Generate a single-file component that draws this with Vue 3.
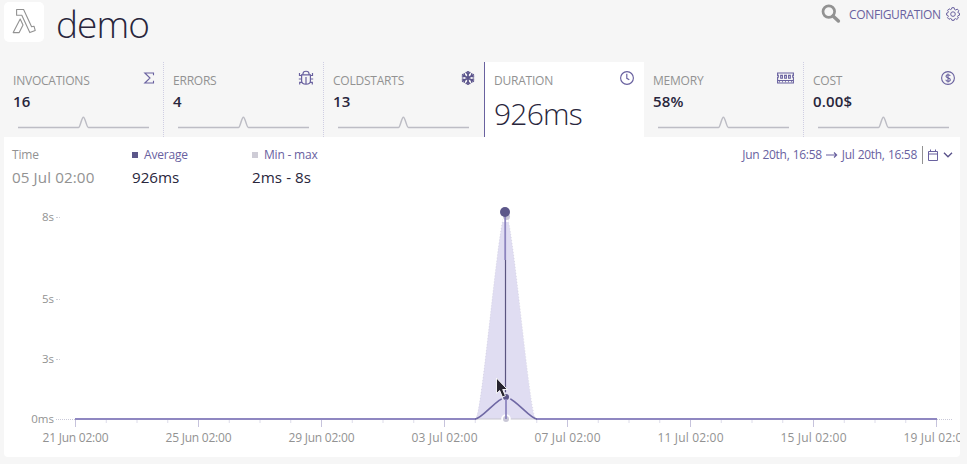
<script setup>
const metrics = [
  { key: 'inv', label: 'INVOCATIONS', value: '16', icon: 'sigma' },
  { key: 'err', label: 'ERRORS', value: '4', icon: 'bug' },
  { key: 'cold', label: 'COLDSTARTS', value: '13', icon: 'snow' },
  { key: 'dur', label: 'DURATION', value: '926ms', icon: 'clock', active: true },
  { key: 'mem', label: 'MEMORY', value: '58%', icon: 'memory' },
  { key: 'cost', label: 'COST', value: '0.00$', icon: 'dollar' },
]
const yTicks = [
  { label: '8s', y: 217 },
  { label: '5s', y: 299 },
  { label: '3s', y: 359 },
  { label: '0ms', y: 419 },
]
const dates = ['21 Jun', '25 Jun', '29 Jun', '03 Jul', '07 Jul', '11 Jul', '15 Jul', '19 Jul']
const xTicks = dates.map((d, i) => ({ label: d + ' 02:00', x: 75.5 + i * 123 }))
const minor = Array.from({ length: 28 }, (_, i) => 75.5 + i * 30.75)
</script>

<template>
  <div class="page">
    <header class="top">
      <div class="logo">
        <svg width="24" height="26" viewBox="0 0 24 26" fill="none" stroke="#929292" stroke-width="1.1" stroke-linejoin="round">
          <path d="M4.6 1.5H11.6L19.6 18.8L22 18.2L23.2 22.4L17.8 24.6L9.8 7.2H4.6Z" />
          <path d="M8.2 11L11 17L7.2 24.6H1.2Z" />
        </svg>
      </div>
      <h1>demo</h1>
      <div class="actions">
        <svg class="search" width="20" height="20" viewBox="0 0 20 20" fill="none" stroke="#929292">
          <circle cx="7.8" cy="7.6" r="5.8" stroke-width="2.7" />
          <path d="M12 12L17.4 17" stroke-width="3.4" stroke-linecap="round" />
        </svg>
        <span class="config">CONFIGURATION</span>
        <svg class="gear" width="14" height="14" viewBox="0 0 14 14" fill="none" stroke="#69619f" stroke-width="1" stroke-linejoin="round">
          <path d="M5.9.7H8.1L8.6 2.5L9.7 3L11.3 2.1L12.8 3.7L11.9 5.2L12.3 6L13.5 6.3V8.2L12 8.6L11.6 9.5L12.4 11L10.9 12.4L9.5 11.6L8.5 12L8.1 13.3H5.9L5.4 11.9L4.4 11.5L3 12.3L1.5 10.7L2.4 9.4L2 8.5L.6 8.1V6.1L2 5.7L2.4 4.8L1.6 3.3L3.1 1.8L4.5 2.6L5.4 2.2Z" />
          <circle cx="7" cy="7.1" r="2.3" />
        </svg>
      </div>
    </header>

    <nav class="tabs">
      <div v-for="m in metrics" :key="m.key" class="tab" :class="[m.key, { active: m.active }]">
        <div class="tab-head">
          <span class="label">{{ m.label }}</span>
          <svg v-if="m.icon === 'sigma'" class="icon" width="12" height="16" viewBox="2 0 12 16" fill="none" stroke="#69619f" stroke-width="1.1">
            <path d="M12.5 5.2V3H3.8L9 8L3.8 13H12.5V10.8" />
          </svg>
          <svg v-else-if="m.icon === 'bug'" class="icon" width="17" height="16" viewBox="0 0 17 16" fill="none" stroke="#69619f" stroke-width="1.2">
            <path d="M4.9 4.6V4C5 .3 11 .3 11.1 4V4.6M3.6 4.9H12.4V11C12.4 15.3 3.6 15.3 3.6 11ZM8 7V14M1.5 3V5.5H3.5M14.5 3V5.5H12.5M.8 9H3.5M15.2 9H12.5M1.7 14.5V12.3H3.8M14.3 14.5V12.3H12.2" />
          </svg>
          <svg v-else-if="m.icon === 'snow'" class="icon" width="15" height="16" viewBox="0 0 15 16" fill="none" stroke="#5c558c" stroke-width="1.7">
            <path d="M7 1V15M1 4.5L13 11.5M1 11.5L13 4.5" />
            <path d="M4.7 2L7 4.3L9.3 2M4.7 14L7 11.7L9.3 14M.8 7.1L3.8 6.2L3.1 3.1M13.2 8.9L10.2 9.8L10.9 12.9M.8 8.9L3.8 9.8L3.1 12.9M13.2 7.1L10.2 6.2L10.9 3.1" stroke-width="1.3" />
          </svg>
          <svg v-else-if="m.icon === 'clock'" class="icon" width="16" height="16" viewBox="0 0 16 16" fill="none" stroke="#69619f" stroke-width="1.15">
            <circle cx="8" cy="8" r="6.4" />
            <path d="M7.8 3.8V8.3L10.3 9.8" />
          </svg>
          <svg v-else-if="m.icon === 'memory'" class="icon" width="18" height="16" viewBox="0 0 18 16" fill="none" stroke="#69619f" stroke-width="1.1">
            <path d="M.6 3H16.4V5.4H15.7V7.3H16.4V13H.6V7.3H1.3V5.4H.6ZM.6 10.5H16.4M3.7 5.4H5.4V8.2H3.7ZM7.6 5.4H9.4V8.2H7.6ZM11.6 5.4H13.3V8.2H11.6Z" />
            <path d="M2 11.8H15" stroke-dasharray="1 2" />
          </svg>
          <svg v-else class="icon" width="16" height="16" viewBox="0 0 16 16" fill="none" stroke="#69619f" stroke-width="1.1">
            <circle cx="8" cy="8" r="6.4" />
            <path d="M10.2 6C10 4.3 6 4.1 6 6.2C6 8.1 10.3 7.6 10.3 9.8C10.3 11.9 6 11.8 5.8 9.8M8 3.4V12.6" />
          </svg>
        </div>
        <div class="value">{{ m.value }}</div>
        <svg v-if="!m.active" class="spark" width="133" height="14" viewBox="0 0 133 14" fill="none" stroke="#bdbdc5" stroke-width="1.5">
          <path d="M1 11.5H61.5C63.2 11.5 64.6 1.2 66.4 1.2S69.6 11.5 71.4 11.5H132" />
        </svg>
      </div>
    </nav>

    <section class="panel">
      <div class="panel-head">
        <div class="stat time"><span class="name">Time</span><span class="num">05 Jul 02:00</span></div>
        <div class="stat avg"><span class="name"><i class="swatch"></i>Average</span><span class="num">926ms</span></div>
        <div class="stat range"><span class="name"><i class="swatch pale"></i>Min - max</span><span class="num">2ms - 8s</span></div>
        <div class="picker">
          <span class="from">Jun 20th, 16:58</span>
          <svg class="arrow" width="12" height="10" viewBox="0 0 12 10" fill="none" stroke="#69619f" stroke-width="1.2"><path d="M0 5H10.5M8 2.5L10.6 5L8 7.5" /></svg>
          <span class="to">Jul 20th, 16:58</span>
          <i class="rule"></i>
          <svg width="12" height="12" viewBox="0 0 12 12" fill="none" stroke="#69619f"><path d="M1.5 2.5H10.5V11.5H1.5ZM1.5 5H10.5M3.5 .5V2.5M8.5 .5V2.5" /></svg>
          <svg class="chev" width="10" height="8" viewBox="0 0 10 8" fill="none" stroke="#5c558c" stroke-width="1.4"><path d="M1 1.8L5 5.8L9 1.8" /></svg>
        </div>
      </div>

      <svg class="chart" width="956" height="260" viewBox="4 197 956 260">
        <g class="axis">
          <g v-for="t in yTicks" :key="t.label">
            <text class="y-label" :x="54" :y="t.y + 4.3" text-anchor="end">{{ t.label }}</text>
            <path v-if="t.label !== '0ms'" :d="`M56 ${t.y + .5}h4`" stroke="#cfcfd8" stroke-dasharray="2 1" />
          </g>
          <path d="M56 419.5H75M937 419.5H952" stroke="#c9c9d8" stroke-dasharray="1 1" />
          <path v-for="x in minor" :key="x" :d="`M${x} 420v3`" stroke="#dddcea" />
          <g v-for="t in xTicks" :key="t.label">
            <path :d="`M${t.x} 420v7`" stroke="#c6c3dc" />
            <text :x="t.x" y="442" text-anchor="middle" textLength="66">{{ t.label }}</text>
          </g>
        </g>
        <path d="M475.5 419C482 419 498.5 213 505.5 213S529.5 419 536 419Z" fill="#e0ddf2" />
        <path d="M475.5 419C482 419 498.5 213 505.5 213S529.5 419 536 419" fill="none" stroke="#cbc9da" stroke-width=".6" stroke-dasharray="1 2" />
        <path d="M475 419H537" stroke="#c8c6d0" />
        <path d="M536 419H937M75 419H476" stroke="#8f87c1" stroke-width="2" />
        <path d="M475 419C482 419 497 398 506 397C515 398 530 419 537 419" fill="none" stroke="#6f68a4" stroke-width="1.6" />
        <path d="M502.5 222L503.5 212H507.5L508.5 222Z" fill="#fff" />
        <circle cx="506.5" cy="216.5" r="3.5" fill="#cac8d7" />
        <path d="M505.2 212V260" stroke="#8d85bf" stroke-width="1.8" />
        <path d="M505.5 260V397" stroke="#5b5580" stroke-width="1.2" />
        <circle cx="505" cy="212" r="5" fill="#5c578a" />
        <circle cx="506" cy="397" r="4.8" fill="#e0ddf2" />
        <circle cx="506" cy="397" r="3" fill="#5c578a" />
        <circle cx="506" cy="419" r="4.8" fill="#fff" />
        <circle cx="506" cy="419" r="3" fill="#cac8d7" />
        <path d="M506 399V419" stroke="#8d85bf" stroke-width="1.8" />
        <path d="M496.5 378V393.5L499.7 390.5L502.4 397L505.4 395.8L502.7 389.5H507.4Z" fill="#26232e" stroke="#fff" stroke-width=".9" />
      </svg>
    </section>
  </div>
</template>

<style>
body { background: #f6f6f6; overflow: hidden; }
</style>

<style scoped>
.page { box-sizing: border-box; width: 967px; height: 464px; padding: 0 7px 7px 4px; background: #f6f6f6; font-family: "Open Sans", "Noto Sans", sans-serif; color: #29263c; }
svg { display: block; flex: none; }
.top { display: flex; height: 62px; align-items: flex-start; }
.logo { box-sizing: border-box; width: 40px; height: 40px; margin-top: 2px; padding: 6px 0 0 8px; background: #fff; border-radius: 5px; }
h1 { margin: -2px 0 0 12px; font-size: 37px; line-height: 52px; font-weight: 300; letter-spacing: -.9px; }
.actions { display: flex; margin-left: auto; align-items: center; padding-top: 3px; height: 22px; }
.search { margin: -1px 8px 0 0; }
.config { width: 92px; font-size: 12px; letter-spacing: -.35px; color: #69619f; white-space: nowrap; }
.gear { margin-left: 5px; }
.tabs { display: grid; grid-template-columns: repeat(5, 160px) 156px; height: 75px; }
.tab { box-sizing: border-box; padding: 8px 8px 0 9px; border-right: 1px dotted #cfcee2; min-width: 0; }
.tab.cold, .tab.cost { border-right: 0; }
.tab.cost { padding-right: 4px; }
.tab.active { background: #fff; border-left: 1px solid #69619f; border-right-color: #fff; }
.tab-head { display: flex; justify-content: space-between; height: 20px; }
.label { font-size: 12px; line-height: 22px; letter-spacing: -.22px; color: #929292; white-space: nowrap; }
.value { font-size: 15px; line-height: 23px; font-weight: 600; letter-spacing: .15px; }
.active .value { margin-top: 6px; font-size: 30px; line-height: 36px; font-weight: 300; letter-spacing: -.8px; }
.spark { margin: 3px 0 0 4px; }
.panel { height: 320px; background: #fff; border-radius: 0 0 4px 4px; overflow: hidden; }
.panel-head { display: flex; height: 60px; padding: 8px 7px 0 8px; box-sizing: border-box; }
.stat { display: flex; flex-direction: column; width: 120px; }
.name { display: flex; align-items: center; height: 19px; font-size: 12px; letter-spacing: -.2px; color: #69619f; }
.num { font-size: 15.2px; line-height: 26px; letter-spacing: -.05px; white-space: nowrap; }
.time .num { letter-spacing: .1px; }
.range .num { letter-spacing: .05px; }
.time .name, .time .num { color: #929292; }
.swatch { width: 6px; height: 6px; margin-right: 6px; background: #5c578a; }
.swatch.pale { background: #ceccd6; }
.picker { display: flex; align-items: center; height: 19px; margin-left: auto; font-size: 12px; letter-spacing: -.3px; word-spacing: .4px; color: #69619f; white-space: nowrap; }
.arrow { margin: 0 4px; }
.rule { width: 1px; height: 18px; margin: 0 4px 0 5px; background: #929292; }
.chev { margin-left: 4px; }
.axis text { font-size: 12px; fill: #929292; }
.axis .y-label { font-size: 11.5px; }
</style>
